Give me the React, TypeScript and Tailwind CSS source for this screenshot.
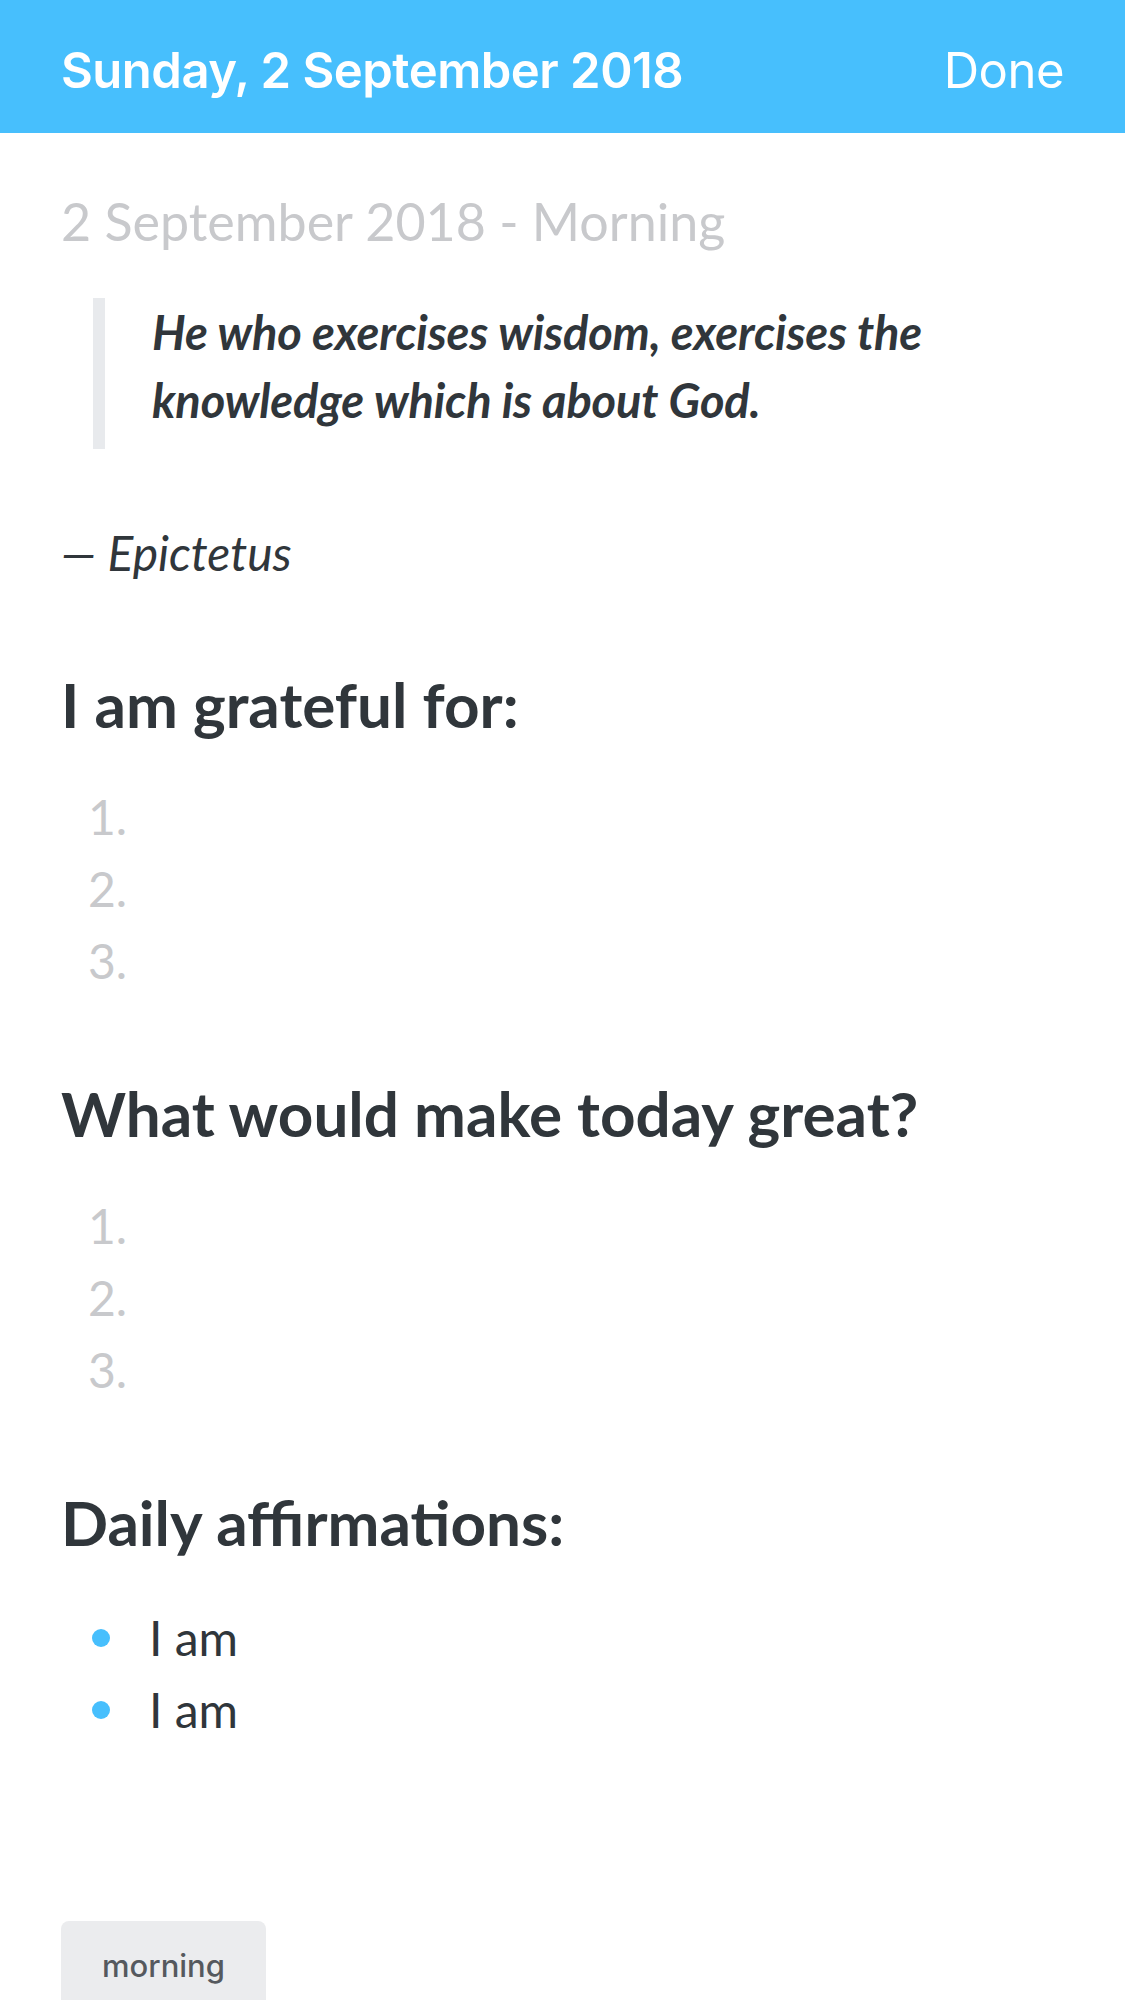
const lato = { fontFamily: "Lato, 'Noto Sans', sans-serif" };

const NumberedList = () => (
  <div className="mt-[39px] text-[48px] leading-[72px] text-[#c8c9cc]">
    {[1, 2, 3].map((n) => (
      <div key={n} className="pl-[27px]">
        {n}.
      </div>
    ))}
  </div>
);

const Heading = ({ children, className = "" }: { children: string; className?: string }) => (
  <h2 className={`text-[62px] leading-[76px] font-bold text-[#30363b] ${className}`}>{children}</h2>
);

export default function App() {
  return (
    <div className="w-[1125px] h-[2000px] overflow-hidden bg-white">
      <header className="h-[133px] bg-[#47bffd] px-[61px] pt-[8px] flex items-center justify-between text-white font-['Inter',sans-serif] text-[49px] tracking-[-0.5px]">
        <span className="font-semibold">Sunday, 2 September 2018</span>
        <span className="font-normal">Done</span>
      </header>

      <main className="px-[61px]" style={lato}>
        <p className="mt-[56px] text-[52px] leading-[65px] text-[#c8c9cc]">2 September 2018 - Morning</p>

        <blockquote className="mt-[49px] ml-[32px] border-l-[12px] border-[#e8eaed] pl-[47px] pb-[15px] text-[47px] leading-[68px] font-bold italic text-[#30363b]">
          <p className="-mt-[5px] tracking-[-0.15px]">He who exercises wisdom, exercises the knowledge which is about God.</p>
        </blockquote>

        <p className="mt-[68px] text-[48px] leading-[72px] italic text-[#30363b]">— Epictetus</p>

        <Heading className="mt-[77px]">I am grateful for:</Heading>
        <NumberedList />

        <Heading className="mt-[78px]">What would make today great?</Heading>
        <NumberedList />

        <Heading className="mt-[78px]">Daily affirmations:</Heading>
        <ul className="mt-[42px] text-[48px] leading-[72px] text-[#30363b]">
          {["I am", "I am"].map((t, i) => (
            <li key={i} className="flex items-center">
              <span className="ml-[31px] w-[18px] h-[18px] rounded-full bg-[#47bffd]" />
              <span className="ml-[39px]">{t}</span>
            </li>
          ))}
        </ul>

        <div className="mt-[175px]">
          <span className="inline-block rounded-[8px] bg-[#ebecee] px-[41px] pt-[27px] pb-[23px] text-[31px] leading-[36px] font-medium text-[#55595e] font-['Inter',sans-serif]">
            morning
          </span>
        </div>
      </main>
    </div>
  );
}
